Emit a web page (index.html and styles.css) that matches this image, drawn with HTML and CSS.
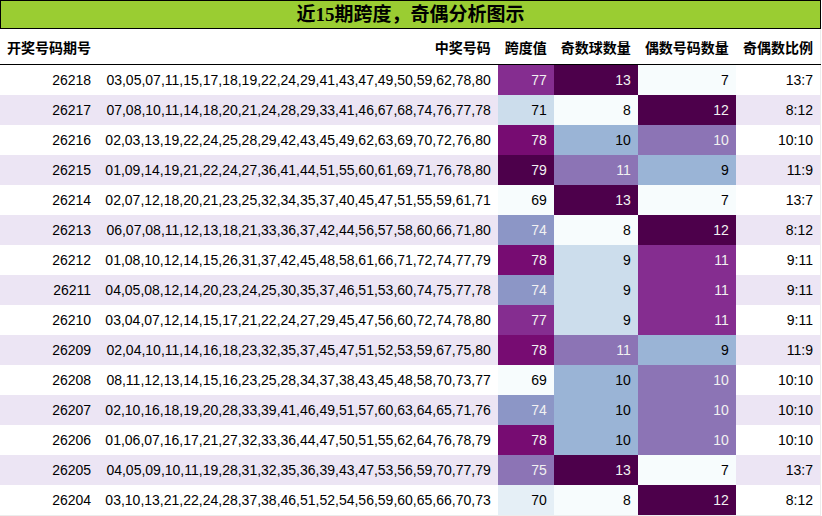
FILE: index.html
```html
<!DOCTYPE html>
<html lang="zh">
<head>
<meta charset="utf-8">
<title>近15期跨度，奇偶分析图示</title>
<link rel="stylesheet" href="styles.css">
</head>
<body>
<div class="sheet">
  <div class="title">近15期跨度，奇偶分析图示</div>
  <table class="grid">
    <thead>
      <tr><th>开奖号码期号</th><th>中奖号码</th><th>跨度值</th><th>奇数球数量</th><th>偶数号码数量</th><th>奇偶数比例</th></tr>
    </thead>
    <tbody>
      <tr><td>26218</td><td>03,05,07,11,15,17,18,19,22,24,29,41,43,47,49,50,59,62,78,80</td><td class="c8 lt">77</td><td class="c10 lt">13</td><td class="c0">7</td><td>13:7</td></tr>
      <tr><td>26217</td><td>07,08,10,11,14,18,20,21,24,28,29,33,41,46,67,68,74,76,77,78</td><td class="c2">71</td><td class="c0">8</td><td class="c10 lt">12</td><td>8:12</td></tr>
      <tr><td>26216</td><td>02,03,13,19,22,24,25,28,29,42,43,45,49,62,63,69,70,72,76,80</td><td class="c9 lt">78</td><td class="c4">10</td><td class="c6 lt">10</td><td>10:10</td></tr>
      <tr><td>26215</td><td>01,09,14,19,21,22,24,27,36,41,44,51,55,60,61,69,71,76,78,80</td><td class="c10 lt">79</td><td class="c6 lt">11</td><td class="c4">9</td><td>11:9</td></tr>
      <tr><td>26214</td><td>02,07,12,18,20,21,23,25,32,34,35,37,40,45,47,51,55,59,61,71</td><td class="c0">69</td><td class="c10 lt">13</td><td class="c0">7</td><td>13:7</td></tr>
      <tr><td>26213</td><td>06,07,08,11,12,13,18,21,33,36,37,42,44,56,57,58,60,66,71,80</td><td class="c5 lt">74</td><td class="c0">8</td><td class="c10 lt">12</td><td>8:12</td></tr>
      <tr><td>26212</td><td>01,08,10,12,14,15,26,31,37,42,45,48,58,61,66,71,72,74,77,79</td><td class="c9 lt">78</td><td class="c2">9</td><td class="c8 lt">11</td><td>9:11</td></tr>
      <tr><td>26211</td><td>04,05,08,12,14,20,23,24,25,30,35,37,46,51,53,60,74,75,77,78</td><td class="c5 lt">74</td><td class="c2">9</td><td class="c8 lt">11</td><td>9:11</td></tr>
      <tr><td>26210</td><td>03,04,07,12,14,15,17,21,22,24,27,29,45,47,56,60,72,74,78,80</td><td class="c8 lt">77</td><td class="c2">9</td><td class="c8 lt">11</td><td>9:11</td></tr>
      <tr><td>26209</td><td>02,04,10,11,14,16,18,23,32,35,37,45,47,51,52,53,59,67,75,80</td><td class="c9 lt">78</td><td class="c6 lt">11</td><td class="c4">9</td><td>11:9</td></tr>
      <tr><td>26208</td><td>08,11,12,13,14,15,16,23,25,28,34,37,38,43,45,48,58,70,73,77</td><td class="c0">69</td><td class="c4">10</td><td class="c6 lt">10</td><td>10:10</td></tr>
      <tr><td>26207</td><td>02,10,16,18,19,20,28,33,39,41,46,49,51,57,60,63,64,65,71,76</td><td class="c5 lt">74</td><td class="c4">10</td><td class="c6 lt">10</td><td>10:10</td></tr>
      <tr><td>26206</td><td>01,06,07,16,17,21,27,32,33,36,44,47,50,51,55,62,64,76,78,79</td><td class="c9 lt">78</td><td class="c4">10</td><td class="c6 lt">10</td><td>10:10</td></tr>
      <tr><td>26205</td><td>04,05,09,10,11,19,28,31,32,35,36,39,43,47,53,56,59,70,77,79</td><td class="c6 lt">75</td><td class="c10 lt">13</td><td class="c0">7</td><td>13:7</td></tr>
      <tr><td>26204</td><td>03,10,13,21,22,24,28,37,38,46,51,52,54,56,59,60,65,66,70,73</td><td class="c1">70</td><td class="c0">8</td><td class="c10 lt">12</td><td>8:12</td></tr>
    </tbody>
  </table>
</div>
</body>
</html>
```

FILE: styles.css
```css
html, body {
  margin: 0;
  padding: 0;
  background: #ffffff;
}

.sheet {
  width: 821px;
  font-family: "Liberation Sans", "Noto Sans CJK SC", sans-serif;
  color: #000000;
}

.title {
  height: 27px;
  border: 1px solid #000000;
  background: #9acd32;
  font-family: "Liberation Serif", "Noto Sans CJK SC", serif;
  font-weight: bold;
  font-size: 19px;
  line-height: 28px;
  text-align: center;
}

.grid {
  width: 821px;
  border-collapse: collapse;
  border-right: 1px solid #ececec;
  border-bottom: 1px solid #ececec;
  font-size: 14px;
}

.grid th,
.grid td {
  padding: 0 7px;
  text-align: right;
  white-space: nowrap;
}

.grid th {
  height: 35px;
  font-family: "Noto Sans CJK SC", sans-serif;
  font-weight: bold;
  font-size: 14px;
  border-bottom: 1px solid #000000;
}

.grid tbody tr:first-child td {
  border-top: 1px solid #ffffff;
}

.grid td {
  height: 30px;
  line-height: 30px;
}

.grid tbody tr:nth-child(even) {
  background: #ece5f4;
}

.c0 { background: #f7fcfd; }
.c1 { background: #e5eff6; }
.c2 { background: #ccddec; }
.c4 { background: #9ab4d6; }
.c5 { background: #8c96c6; }
.c6 { background: #8c74b5; }
.c8 { background: #852d90; }
.c9 { background: #770c72; }
.c10 { background: #4d004b; }

.lt { color: #f1f1f1; }
```
